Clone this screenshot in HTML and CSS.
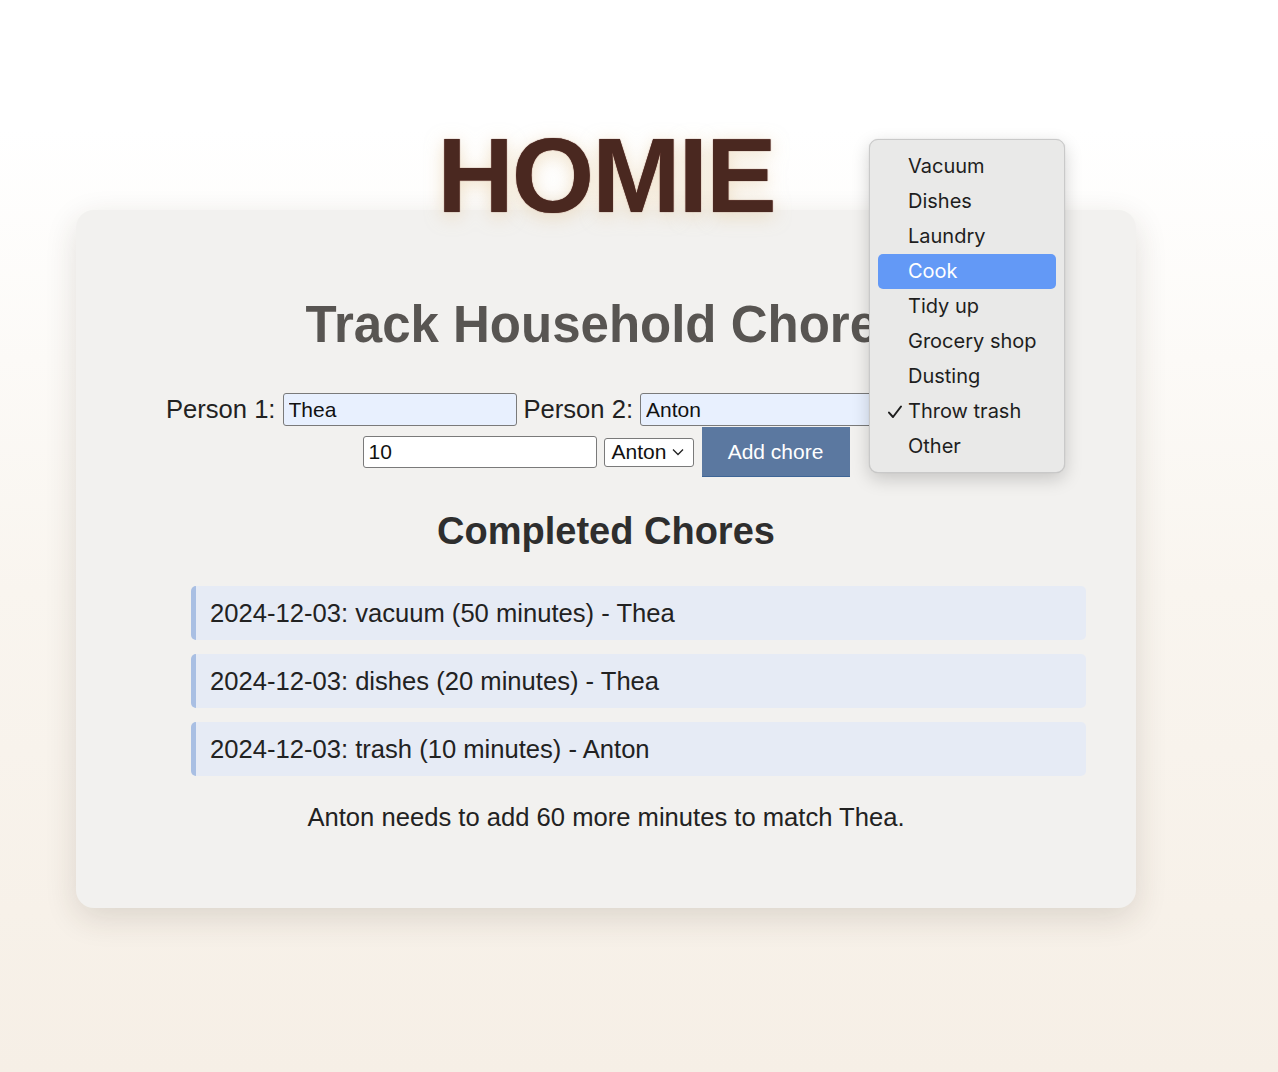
FILE: index.html
```html
<!DOCTYPE html>
<html lang="en">
<head>
<meta charset="utf-8">
<title>Homie</title>
<link rel="stylesheet" href="styles.css">
</head>
<body>
<div class="page">
  <h1 class="logo">HOMIE</h1>
  <main class="card">
    <h2 class="title">Track Household Chores</h2>
    <form class="chore-form">
      <label class="lbl" for="p1">Person 1:</label>
      <input class="field autofill" id="p1" type="text" value="Thea">
      <label class="lbl" for="p2">Person 2:</label>
      <input class="field autofill" id="p2" type="text" value="Anton">
      <span class="fake-select chore-select"><span class="covered">Throw trash</span>
        <svg class="chev" width="12" height="8" viewBox="0 0 12 8"><path d="M1 1.5 L6 6.5 L11 1.5" fill="none" stroke="#222" stroke-width="1.3"/></svg>
      </span>
      <input class="field minutes" type="text" value="10">
      <span class="fake-select person-select">Anton
        <svg class="chev" width="12" height="8" viewBox="0 0 12 8"><path d="M1 1.5 L6 6.5 L11 1.5" fill="none" stroke="#222" stroke-width="1.3"/></svg>
      </span>
      <button class="add-btn" type="button">Add chore</button>
    </form>
    <h3 class="subtitle">Completed Chores</h3>
    <ul class="chores">
      <li class="chore">2024-12-03: vacuum (50 minutes) - Thea</li>
      <li class="chore">2024-12-03: dishes (20 minutes) - Thea</li>
      <li class="chore">2024-12-03: trash (10 minutes) - Anton</li>
    </ul>
    <p class="summary">Anton needs to add 60 more minutes to match Thea.</p>
  </main>
</div>

<div class="popup" role="listbox">
  <div class="opt">Vacuum</div>
  <div class="opt">Dishes</div>
  <div class="opt">Laundry</div>
  <div class="opt hl">Cook</div>
  <div class="opt">Tidy up</div>
  <div class="opt">Grocery shop</div>
  <div class="opt">Dusting</div>
  <div class="opt checked"><svg class="check" width="16" height="16" viewBox="0 0 16 16"><path d="M2 8.6 L6 13 L14 2.5" fill="none" stroke="#1e1e1e" stroke-width="2" stroke-linecap="round" stroke-linejoin="round"/></svg>Throw trash</div>
  <div class="opt">Other</div>
</div>
</body>
</html>
```
FILE: styles.css
```css
html, body {
  margin: 0;
  padding: 0;
}

body {
  min-height: 1072px;
  background: linear-gradient(180deg, #ffffff 0%, #ffffff 12%, #f9f5ef 55%, #f6efe6 100%);
  font-family: "Liberation Sans", Arial, Helvetica, sans-serif;
  color: #222;
  position: relative;
}

.page {
  width: 1212px;
  padding-top: 122px;
}

.logo {
  position: relative;
  z-index: 1;
  margin: 0 0 -18px;
  text-align: center;
  font-size: 106px;
  line-height: 1;
  font-weight: 700;
  letter-spacing: -2px;
  color: #4a2820;
  text-shadow: 0 0 1px #5a1f18, 0 4px 18px rgba(226, 196, 150, 0.55);
}

.card {
  margin: 0 76px;
  padding: 50px;
  background: #f2f1ef;
  border-radius: 18px;
  box-shadow: 0 10px 32px rgba(60, 45, 30, 0.14);
  text-align: center;
}

.title {
  margin: 35px 0 35px;
  font-size: 51px;
  font-weight: 700;
  color: #585552;
}

.chore-form {
  display: flex;
  flex-wrap: wrap;
  justify-content: center;
  align-items: center;
  column-gap: 7px;
  row-gap: 0;
  padding-top: 3px;
  font-size: 25.6px;
}

.lbl {
  line-height: 35px;
  color: #222;
}

.field {
  box-sizing: border-box;
  width: 234px;
  height: 33px;
  padding: 2px 5px;
  font-family: "Liberation Sans", Arial, sans-serif;
  font-size: 21px;
  color: #111;
  background: #fff;
  border: 1px solid #7a7a7a;
  border-radius: 3px;
  outline: none;
}

.autofill {
  background: #e8f0fe;
}

.minutes {
  height: 32px;
}

.fake-select {
  box-sizing: border-box;
  display: inline-flex;
  align-items: center;
  gap: 6px;
  height: 29px;
  padding: 0 6px 0 7px;
  font-size: 21px;
  color: #111;
  background: #fff;
  border: 1px solid #7a7a7a;
  border-radius: 3px;
  white-space: nowrap;
}

.chore-select {
  width: 165px;
  justify-content: space-between;
}

.covered {
  visibility: hidden;
}

.person-select {
  width: 90px;
}

.chev {
  flex: none;
}

.add-btn {
  box-sizing: border-box;
  width: 148px;
  height: 50px;
  margin-left: 1px;
  padding: 0;
  font-family: "Liberation Sans", Arial, sans-serif;
  font-size: 21px;
  color: #fff;
  background: #5b78a0;
  border: none;
  border-bottom: 1px solid #3e6596;
  border-radius: 0;
}

.subtitle {
  margin: 33px 0 33px;
  font-size: 38px;
  font-weight: 700;
  color: #2e2e2e;
}

.chores {
  list-style: none;
  margin: 0;
  padding: 0 0 0 65px;
  display: flex;
  flex-direction: column;
  gap: 14px;
  text-align: left;
}

.chore {
  padding: 12px 12px 12px 14px;
  line-height: 30px;
  font-size: 25.6px;
  color: #222;
  background: #e6ebf5;
  border-left: 5px solid #a9bfe3;
  border-radius: 5px;
}

.summary {
  margin: 26px 0 26px;
  font-size: 25.6px;
  line-height: 30px;
  color: #222;
}

/* open native select popup */
.popup {
  position: absolute;
  left: 869px;
  top: 139px;
  box-sizing: border-box;
  width: 196px;
  padding: 9px 8px 8px;
  background: #e9e9e8;
  border: 1px solid #c9c9c9;
  border-radius: 9px;
  box-shadow: 0 6px 18px rgba(0, 0, 0, 0.18), 0 0 1px rgba(0, 0, 0, 0.2);
  font-family: Inter, "Noto Sans", sans-serif;
  font-size: 20px;
  color: #1e1e1e;
  z-index: 5;
}

.opt {
  position: relative;
  height: 35px;
  line-height: 35px;
  padding-left: 30px;
  border-radius: 5px;
}

.opt.hl {
  background: #6399f6;
  color: #fff;
}

.check {
  position: absolute;
  left: 9px;
  top: 10px;
}
```
